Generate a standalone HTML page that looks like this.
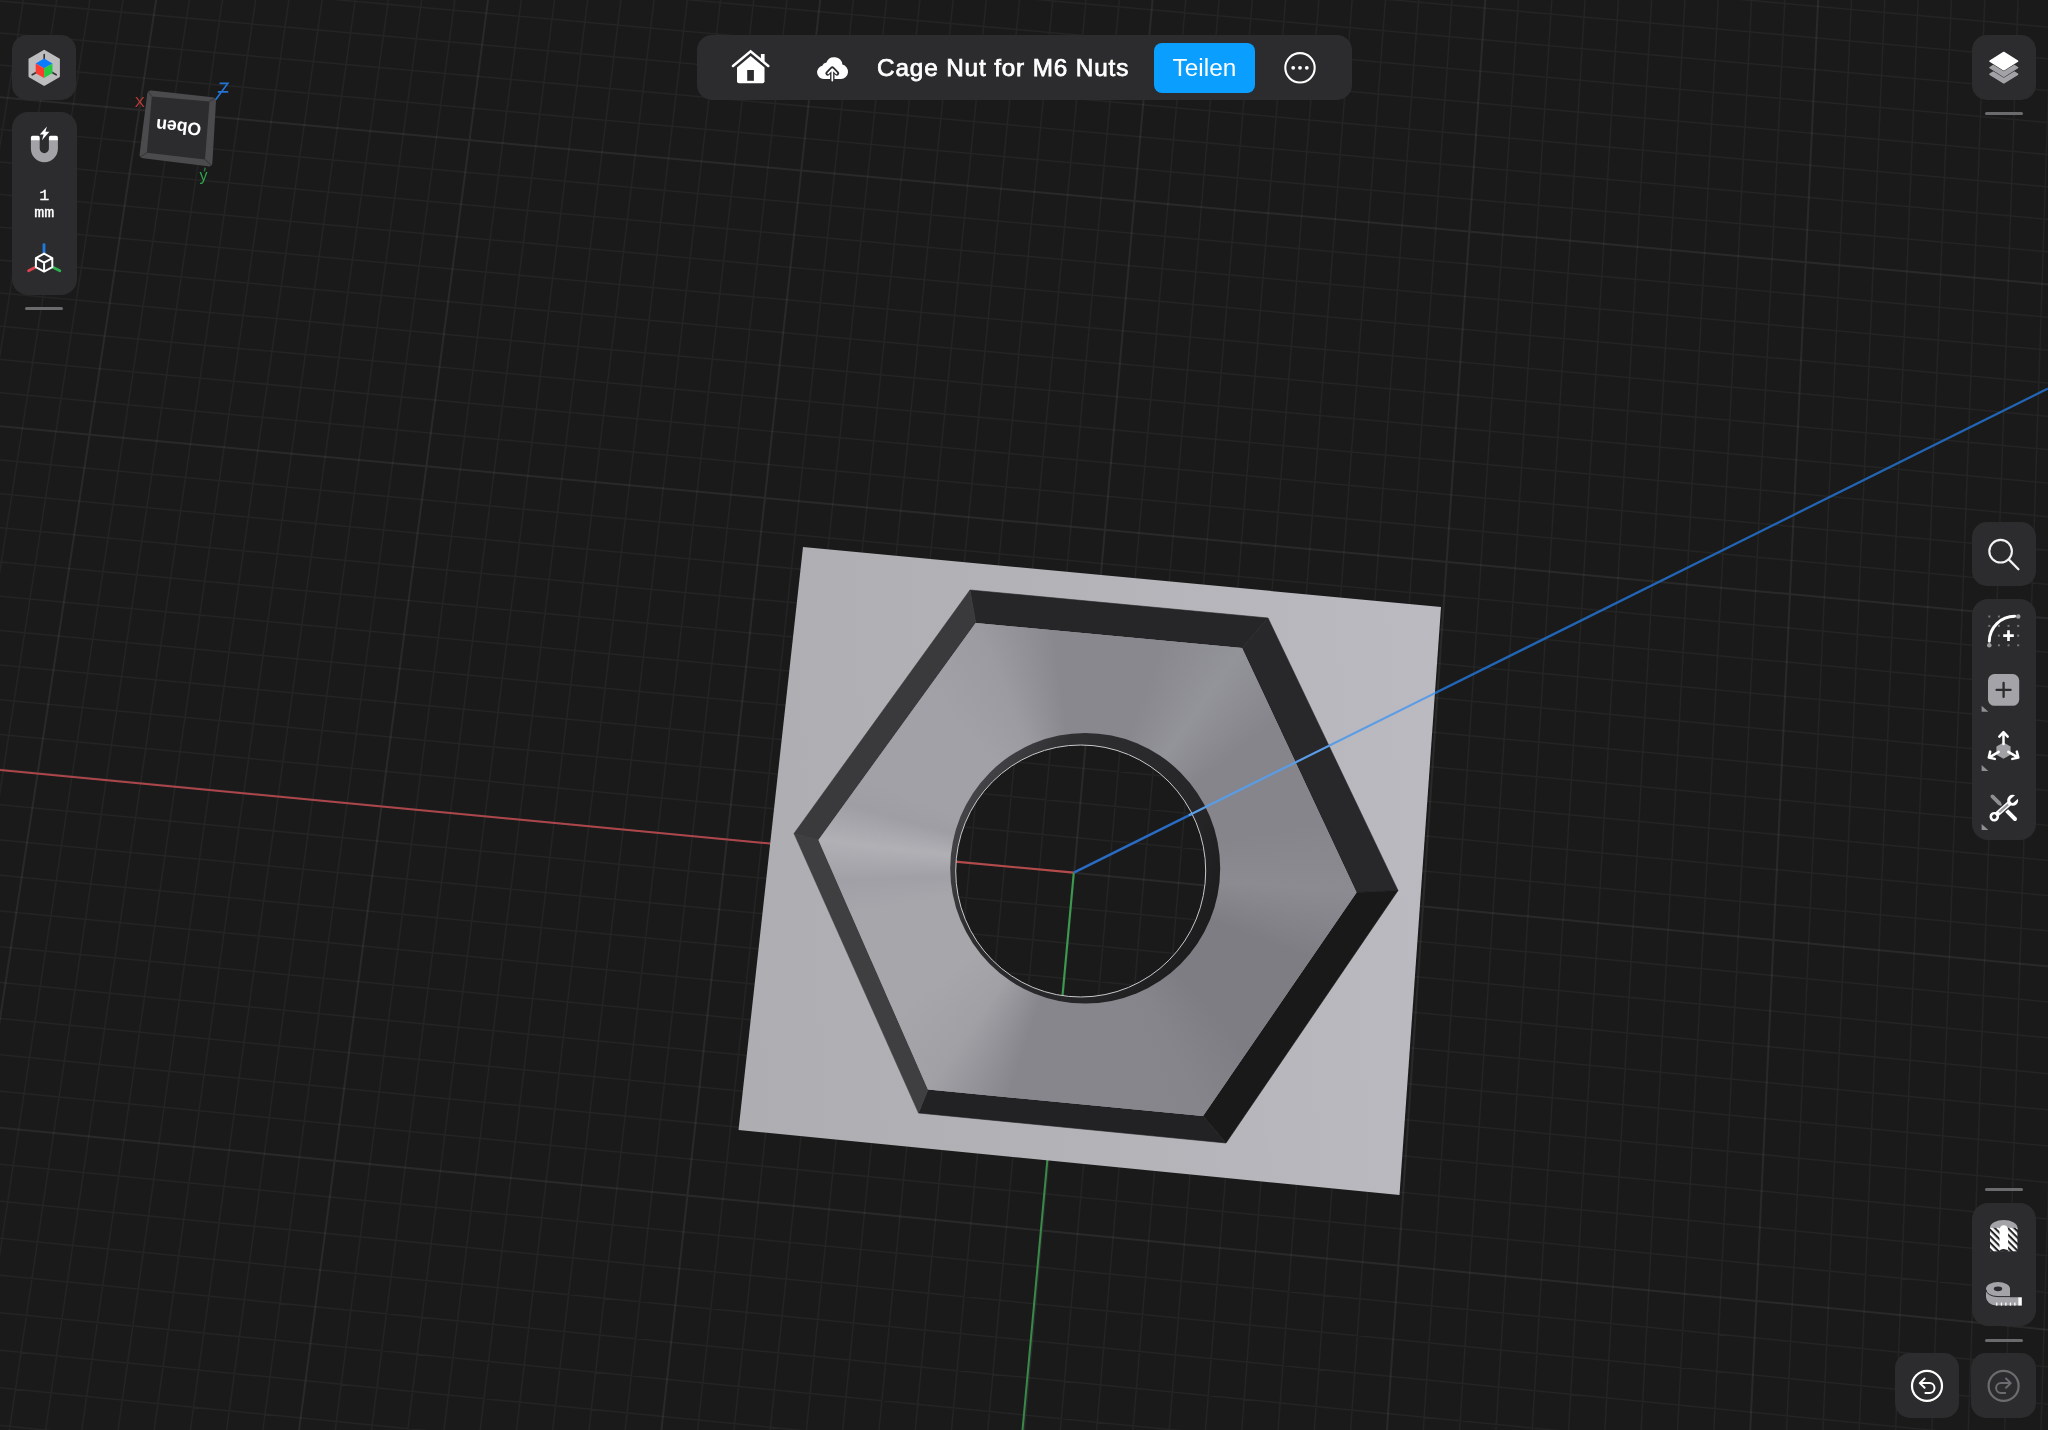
<!DOCTYPE html>
<html><head><meta charset="utf-8"><title>Cage Nut for M6 Nuts</title>
<style>
html,body{margin:0;padding:0;background:#1a1a1a;}
body{width:2048px;height:1430px;overflow:hidden;position:relative;font-family:"Liberation Sans",sans-serif;}
#scene{position:absolute;left:0;top:0;}
.pn{position:absolute;background:#2c2c2e;box-sizing:border-box;}
.sep{position:absolute;height:3px;border-radius:1.5px;background:#6b6b6e;}
.t{position:absolute;font-family:"Liberation Sans",sans-serif;will-change:transform;}
.m{position:absolute;font-family:"Liberation Mono",monospace;will-change:transform;}
</style></head><body>
<svg id="scene" width="2048" height="1430" viewBox="0 0 2048 1430">
<defs>
<linearGradient id="gpl" gradientUnits="userSpaceOnUse" x1="740" y1="900" x2="1440" y2="860"><stop offset="0" stop-color="#adadb2"/><stop offset="0.5" stop-color="#b3b3b8"/><stop offset="1" stop-color="#bbbac0"/></linearGradient>
<clipPath id="chex"><polygon points="975.7,623.0 1242.0,648.0 1356.5,892.5 1203.0,1116.0 928.0,1089.5 818.5,840.0"/></clipPath>
<clipPath id="chole"><ellipse cx="1080.7" cy="871" rx="125" ry="126"/></clipPath>
<clipPath id="cplate"><polygon points="803.0,547.0 1441.0,607.0 1399.5,1195.0 738.5,1130.0"/></clipPath>
<filter id="gb" x="0" y="0" width="100%" height="100%" filterUnits="userSpaceOnUse"><feGaussianBlur stdDeviation="0.45"/></filter>
<filter id="blur" x="-10%" y="-10%" width="120%" height="120%"><feGaussianBlur stdDeviation="9"/></filter>
<linearGradient id="gring" gradientUnits="userSpaceOnUse" x1="950" y1="800" x2="1220" y2="950"><stop offset="0" stop-color="#4a4a4e"/><stop offset="0.25" stop-color="#2e2e31"/><stop offset="0.7" stop-color="#262628"/><stop offset="1" stop-color="#1a1a1b"/></linearGradient>
</defs>
<g id="grid" fill="none" filter="url(#gb)"><path d="M2053.0 1036.5L2040.8 1435.0M2051.5 -5.0L2004.5 1435.0M2018.2 -5.0L1968.1 1435.0M1984.9 -5.0L1931.7 1435.0M1951.6 -5.0L1895.4 1435.0M1918.3 -5.0L1859.0 1435.0M1885.0 -5.0L1822.7 1435.0M1851.7 -5.0L1786.3 1435.0M1785.1 -5.0L1713.6 1435.0M1751.8 -5.0L1677.3 1435.0M1718.5 -5.0L1640.9 1435.0M1685.2 -5.0L1604.6 1435.0M1651.9 -5.0L1568.3 1435.0M1618.7 -5.0L1531.9 1435.0M1585.4 -5.0L1495.6 1435.0M1552.1 -5.0L1459.3 1435.0M1518.8 -5.0L1423.0 1435.0M1452.3 -5.0L1350.3 1435.0M1419.0 -5.0L1314.0 1435.0M1385.8 -5.0L1277.7 1435.0M1352.5 -5.0L1241.4 1435.0M1319.2 -5.0L1205.1 1435.0M1286.0 -5.0L1168.8 1435.0M1252.7 -5.0L1132.5 1435.0M1219.5 -5.0L1096.2 1435.0M1186.2 -5.0L1059.9 1435.0M1119.8 -5.0L987.3 1435.0M1086.5 -5.0L951.0 1435.0M1053.3 -5.0L914.8 1435.0M1020.0 -5.0L878.5 1435.0M986.8 -5.0L842.2 1435.0M953.6 -5.0L805.9 1435.0M920.4 -5.0L769.7 1435.0M887.1 -5.0L733.4 1435.0M853.9 -5.0L697.1 1435.0M787.5 -5.0L624.6 1435.0M754.3 -5.0L588.4 1435.0M721.1 -5.0L552.1 1435.0M687.9 -5.0L515.9 1435.0M654.7 -5.0L479.6 1435.0M621.5 -5.0L443.4 1435.0M588.3 -5.0L407.1 1435.0M555.1 -5.0L370.9 1435.0M521.9 -5.0L334.6 1435.0M455.5 -5.0L262.2 1435.0M422.3 -5.0L226.0 1435.0M389.1 -5.0L189.7 1435.0M355.9 -5.0L153.5 1435.0M322.8 -5.0L117.3 1435.0M289.6 -5.0L81.1 1435.0M256.4 -5.0L44.9 1435.0M223.2 -5.0L8.7 1435.0M190.1 -5.0L-5.0 1285.9M123.8 -5.0L-5.0 823.8M90.6 -5.0L-5.0 602.1M57.4 -5.0L-5.0 386.3M24.3 -5.0L-5.0 176.1M2043.2 -5.0L2053.0 -4.1M1690.9 -5.0L2053.0 27.5M1338.8 -5.0L2053.0 59.2M987.1 -5.0L2053.0 91.0M635.7 -5.0L2053.0 123.0M284.5 -5.0L2053.0 155.1M-5.0 0.6L2053.0 187.4M-5.0 32.5L2053.0 219.8M-5.0 64.5L2053.0 252.3M-5.0 129.0L2053.0 317.7M-5.0 161.4L2053.0 350.6M-5.0 194.0L2053.0 383.6M-5.0 226.7L2053.0 416.8M-5.0 259.6L2053.0 450.1M-5.0 292.5L2053.0 483.6M-5.0 325.7L2053.0 517.2M-5.0 358.9L2053.0 550.9M-5.0 392.3L2053.0 584.8M-5.0 459.5L2053.0 652.9M-5.0 493.3L2053.0 687.2M-5.0 527.3L2053.0 721.7M-5.0 561.4L2053.0 756.3M-5.0 595.6L2053.0 791.0M-5.0 630.0L2053.0 825.9M-5.0 664.5L2053.0 860.9M-5.0 699.2L2053.0 896.1M-5.0 734.0L2053.0 931.4M-5.0 804.1L2053.0 1002.5M-5.0 839.4L2053.0 1038.3M-5.0 874.8L2053.0 1074.2M-5.0 910.4L2053.0 1110.3M-5.0 946.1L2053.0 1146.6M-5.0 982.0L2053.0 1183.0M-5.0 1018.0L2053.0 1219.5M-5.0 1054.2L2053.0 1256.2M-5.0 1090.6L2053.0 1293.1M-5.0 1163.8L2053.0 1367.4M-5.0 1200.6L2053.0 1404.7M-5.0 1237.6L1980.2 1435.0M-5.0 1274.8L1602.3 1435.0M-5.0 1312.1L1224.8 1435.0M-5.0 1349.6L847.5 1435.0M-5.0 1387.2L470.6 1435.0M-5.0 1425.0L94.0 1435.0" stroke="#ffffff" stroke-opacity="0.042" stroke-width="1.5"/><path d="M1818.4 -5.0L1750.0 1435.0M1485.6 -5.0L1386.6 1435.0M1153.0 -5.0L1023.6 1435.0M820.7 -5.0L660.9 1435.0M488.7 -5.0L298.4 1435.0M156.9 -5.0L-5.0 1051.7M-5.0 96.7L2053.0 284.9M-5.0 425.8L2053.0 618.8M-5.0 769.0L2053.0 966.9M-5.0 1127.1L2053.0 1330.2" stroke="#ffffff" stroke-opacity="0.065" stroke-width="2"/></g>
<line x1="0" y1="769.9" x2="1073.8" y2="872.6" stroke="#ad464b" stroke-width="2"/>
<line x1="1073.8" y1="872.6" x2="1022.5" y2="1430" stroke="#398a49" stroke-width="2"/>
<line x1="1073.8" y1="872.6" x2="2048" y2="388.5" stroke="#2265b4" stroke-width="2.3"/>
<polygon points="803.0,547.0 1441.0,607.0 1399.5,1195.0 738.5,1130.0" fill="url(#gpl)"/>
<polygon points="970.0,590.0 1268.0,618.0 1242.0,648.0 975.7,623.0" fill="#262628" stroke="#262628" stroke-width="0.6"/>
<polygon points="1268.0,618.0 1398.0,890.5 1356.5,892.5 1242.0,648.0" fill="#28282b" stroke="#28282b" stroke-width="0.6"/>
<polygon points="1398.0,890.5 1226.0,1143.0 1203.0,1116.0 1356.5,892.5" fill="#19191a" stroke="#19191a" stroke-width="0.6"/>
<polygon points="1226.0,1143.0 918.5,1113.0 928.0,1089.5 1203.0,1116.0" fill="#222224" stroke="#222224" stroke-width="0.6"/>
<polygon points="918.5,1113.0 794.0,833.5 818.5,840.0 928.0,1089.5" fill="#3f3f42" stroke="#3f3f42" stroke-width="0.6"/>
<polygon points="794.0,833.5 970.0,590.0 975.7,623.0 818.5,840.0" fill="#3a3a3d" stroke="#3a3a3d" stroke-width="0.6"/>
<polygon points="975.7,623.0 1242.0,648.0 1356.5,892.5 1203.0,1116.0 928.0,1089.5 818.5,840.0" fill="#909096"/>
<g clip-path="url(#chex)"><foreignObject x="800" y="600" width="580" height="540"><div style="width:580px;height:540px;background:conic-gradient(from 0deg at 283.0px 270.0px, #88888e 0.0deg, #88888e 19.1deg, #93939a 35.6deg, #85858b 52.2deg, #85858b 78.2deg, #8b8b91 94.7deg, #7d7d83 111.3deg, #7d7d83 137.4deg, #85858b 154.0deg, #86868c 171.1deg, #86868c 198.1deg, #a0a0a5 215.2deg, #a6a6ab 232.4deg, #a6a6ab 259.3deg, #a0a0a6 267.5deg, #b0b0b5 276.5deg, #9e9ea4 285.5deg, #a1a1a7 293.3deg, #a1a1a7 319.7deg, #9b9ba1 336.5deg, #88888e 353.1deg, #88888e 360.0deg)"></div></foreignObject></g>
<ellipse cx="1085.2" cy="868.3" rx="135" ry="135.3" fill="url(#gring)"/>
<ellipse cx="1080.7" cy="871" rx="125" ry="126" fill="#1a1a1a"/>
<g clip-path="url(#chole)"><g fill="none" filter="url(#gb)"><path d="M2053.0 1036.5L2040.8 1435.0M2051.5 -5.0L2004.5 1435.0M2018.2 -5.0L1968.1 1435.0M1984.9 -5.0L1931.7 1435.0M1951.6 -5.0L1895.4 1435.0M1918.3 -5.0L1859.0 1435.0M1885.0 -5.0L1822.7 1435.0M1851.7 -5.0L1786.3 1435.0M1785.1 -5.0L1713.6 1435.0M1751.8 -5.0L1677.3 1435.0M1718.5 -5.0L1640.9 1435.0M1685.2 -5.0L1604.6 1435.0M1651.9 -5.0L1568.3 1435.0M1618.7 -5.0L1531.9 1435.0M1585.4 -5.0L1495.6 1435.0M1552.1 -5.0L1459.3 1435.0M1518.8 -5.0L1423.0 1435.0M1452.3 -5.0L1350.3 1435.0M1419.0 -5.0L1314.0 1435.0M1385.8 -5.0L1277.7 1435.0M1352.5 -5.0L1241.4 1435.0M1319.2 -5.0L1205.1 1435.0M1286.0 -5.0L1168.8 1435.0M1252.7 -5.0L1132.5 1435.0M1219.5 -5.0L1096.2 1435.0M1186.2 -5.0L1059.9 1435.0M1119.8 -5.0L987.3 1435.0M1086.5 -5.0L951.0 1435.0M1053.3 -5.0L914.8 1435.0M1020.0 -5.0L878.5 1435.0M986.8 -5.0L842.2 1435.0M953.6 -5.0L805.9 1435.0M920.4 -5.0L769.7 1435.0M887.1 -5.0L733.4 1435.0M853.9 -5.0L697.1 1435.0M787.5 -5.0L624.6 1435.0M754.3 -5.0L588.4 1435.0M721.1 -5.0L552.1 1435.0M687.9 -5.0L515.9 1435.0M654.7 -5.0L479.6 1435.0M621.5 -5.0L443.4 1435.0M588.3 -5.0L407.1 1435.0M555.1 -5.0L370.9 1435.0M521.9 -5.0L334.6 1435.0M455.5 -5.0L262.2 1435.0M422.3 -5.0L226.0 1435.0M389.1 -5.0L189.7 1435.0M355.9 -5.0L153.5 1435.0M322.8 -5.0L117.3 1435.0M289.6 -5.0L81.1 1435.0M256.4 -5.0L44.9 1435.0M223.2 -5.0L8.7 1435.0M190.1 -5.0L-5.0 1285.9M123.8 -5.0L-5.0 823.8M90.6 -5.0L-5.0 602.1M57.4 -5.0L-5.0 386.3M24.3 -5.0L-5.0 176.1M2043.2 -5.0L2053.0 -4.1M1690.9 -5.0L2053.0 27.5M1338.8 -5.0L2053.0 59.2M987.1 -5.0L2053.0 91.0M635.7 -5.0L2053.0 123.0M284.5 -5.0L2053.0 155.1M-5.0 0.6L2053.0 187.4M-5.0 32.5L2053.0 219.8M-5.0 64.5L2053.0 252.3M-5.0 129.0L2053.0 317.7M-5.0 161.4L2053.0 350.6M-5.0 194.0L2053.0 383.6M-5.0 226.7L2053.0 416.8M-5.0 259.6L2053.0 450.1M-5.0 292.5L2053.0 483.6M-5.0 325.7L2053.0 517.2M-5.0 358.9L2053.0 550.9M-5.0 392.3L2053.0 584.8M-5.0 459.5L2053.0 652.9M-5.0 493.3L2053.0 687.2M-5.0 527.3L2053.0 721.7M-5.0 561.4L2053.0 756.3M-5.0 595.6L2053.0 791.0M-5.0 630.0L2053.0 825.9M-5.0 664.5L2053.0 860.9M-5.0 699.2L2053.0 896.1M-5.0 734.0L2053.0 931.4M-5.0 804.1L2053.0 1002.5M-5.0 839.4L2053.0 1038.3M-5.0 874.8L2053.0 1074.2M-5.0 910.4L2053.0 1110.3M-5.0 946.1L2053.0 1146.6M-5.0 982.0L2053.0 1183.0M-5.0 1018.0L2053.0 1219.5M-5.0 1054.2L2053.0 1256.2M-5.0 1090.6L2053.0 1293.1M-5.0 1163.8L2053.0 1367.4M-5.0 1200.6L2053.0 1404.7M-5.0 1237.6L1980.2 1435.0M-5.0 1274.8L1602.3 1435.0M-5.0 1312.1L1224.8 1435.0M-5.0 1349.6L847.5 1435.0M-5.0 1387.2L470.6 1435.0M-5.0 1425.0L94.0 1435.0" stroke="#ffffff" stroke-opacity="0.042" stroke-width="1.5"/><path d="M1818.4 -5.0L1750.0 1435.0M1485.6 -5.0L1386.6 1435.0M1153.0 -5.0L1023.6 1435.0M820.7 -5.0L660.9 1435.0M488.7 -5.0L298.4 1435.0M156.9 -5.0L-5.0 1051.7M-5.0 96.7L2053.0 284.9M-5.0 425.8L2053.0 618.8M-5.0 769.0L2053.0 966.9M-5.0 1127.1L2053.0 1330.2" stroke="#ffffff" stroke-opacity="0.065" stroke-width="2"/></g>
<line x1="900" y1="856.6" x2="1073.8" y2="872.6" stroke="#b54a4a" stroke-width="2.1"/>
<line x1="1073.8" y1="872.6" x2="1050" y2="1131.3" stroke="#3c9a4d" stroke-width="2.1"/>
<line x1="1073.8" y1="872.6" x2="1300" y2="760.2" stroke="#2a6cc4" stroke-width="2.6"/>
</g>
<ellipse cx="1080.7" cy="871" rx="125" ry="126" fill="none" stroke="#c9c9cc" stroke-width="1"/>
<g clip-path="url(#cplate)"><line x1="1189" y1="815.3" x2="1460" y2="680.7" stroke="#5a9ce6" stroke-width="2.2"/></g>
</svg>
<div class="pn" style="left:12px;top:35px;width:64px;height:65px;border-radius:15px;"></div>
<div class="pn" style="left:12px;top:112px;width:64.5px;height:183px;border-radius:16px;"></div>
<div class="sep" style="left:25.3px;top:306.6px;width:38px"></div>
<div class="pn" style="left:696.5px;top:35.3px;width:655px;height:65px;border-radius:15px;"></div>
<div style="position:absolute;left:1154px;top:43.2px;width:100.8px;height:50.3px;border-radius:8px;background:#0a9ffe"></div>
<div class="t" style="left:1154px;top:43.2px;width:100.8px;height:50.3px;line-height:50.3px;text-align:center;font-size:24.4px;color:#fff">Teilen</div>
<div class="t" style="left:877.2px;top:48.4px;height:40px;line-height:40px;font-size:24.3px;color:#fff;letter-spacing:0.86px;-webkit-text-stroke:0.75px #fff;white-space:nowrap">Cage Nut for M6 Nuts</div>
<div class="pn" style="left:1971.5px;top:35px;width:64px;height:65px;border-radius:15px;"></div>
<div class="sep" style="left:1984.7px;top:112px;width:38px"></div>
<div class="pn" style="left:1971.6px;top:522.2px;width:64.2px;height:64.2px;border-radius:15px;"></div>
<div class="pn" style="left:1971.5px;top:598.9px;width:64.4px;height:241px;border-radius:16px;"></div>
<div class="sep" style="left:1985px;top:1188px;width:38px"></div>
<div class="pn" style="left:1971.8px;top:1203.2px;width:64px;height:123px;border-radius:16px;"></div>
<div class="sep" style="left:1985px;top:1338.5px;width:38px"></div>
<div class="pn" style="left:1895px;top:1353px;width:64.2px;height:65px;border-radius:15px;"></div>
<div class="pn" style="left:1971px;top:1353px;width:64.6px;height:65px;border-radius:15px;"></div>
<div class="m" style="left:12px;top:188px;width:64.5px;text-align:center;font-size:15.5px;line-height:17.2px;color:#fff;-webkit-text-stroke:0.3px #fff;transform:scaleX(1.08)">1<br>mm</div>
<svg id="icons" width="2048" height="1430" viewBox="0 0 2048 1430" style="position:absolute;left:0;top:0;will-change:transform">
<defs><pattern id="hatch" width="4.6" height="4.6" patternUnits="userSpaceOnUse" patternTransform="rotate(45 1990 1228)"><rect width="4.6" height="4.6" fill="#fff"/><rect x="0" y="0" width="4.6" height="2.1" fill="#242426"/></pattern></defs>
<polygon points="44.2,50.8 58.9,59.3 58.9,76.3 44.2,84.8 29.5,76.3 29.5,59.3" fill="#bdbdc0" stroke="#bdbdc0" stroke-width="2" stroke-linejoin="round"/>
<path d="M44.2 54.5V60 M32.2 74.8L36.6 72.3 M56.2 74.8L51.8 72.3" stroke="#333336" stroke-width="1.6" stroke-linecap="round"/>
<polygon points="44.1,58.6 52.5,63.4 44.1,68.3 35.7,63.4" fill="#0a7aff"/>
<polygon points="35.7,63.4 44.1,68.3 44.1,78.0 35.7,73.2" fill="#ff3b30"/>
<polygon points="44.1,68.3 52.5,63.4 52.5,73.1 44.1,78.0" fill="#28c840"/>
<path d="M30.9 140 V148.8 A13.5 13.5 0 0 0 57.9 148.8 V140 H48.9 V148.6 A4.6 4.6 0 0 1 39.7 148.6 V140 Z" fill="#a2a2a7"/>
<path d="M30.9 140.2 V137.4 A1.6 1.6 0 0 1 32.5 135.8 H38.1 A1.6 1.6 0 0 1 39.7 137.4 V140.2 Z M48.9 140.2 V137.4 A1.6 1.6 0 0 1 50.5 135.8 H56.3 A1.6 1.6 0 0 1 57.9 137.4 V140.2 Z" fill="#fff"/>
<path d="M46.9 126.6 L39.8 134.6 H43.6 L42.0 140.2 L49.4 131.8 H45.4 Z" fill="#fff"/>
<path d="M44 244.6V252.6" stroke="#1f7ae0" stroke-width="2.8" stroke-linecap="round"/>
<path d="M35.4 267.3L28.6 270.8" stroke="#e0444e" stroke-width="2.8" stroke-linecap="round"/>
<path d="M52.8 267.3L59.8 270.8" stroke="#30b452" stroke-width="2.8" stroke-linecap="round"/>
<path d="M44.1 253.6 L52.3 258.1 V267.2 L44.1 271.6 L35.9 267.2 V258.1 Z M35.9 258.1 L44.1 262.6 L52.3 258.1 M44.1 262.6 V271.6" fill="none" stroke="#fff" stroke-width="2" stroke-linejoin="round"/>
<path d="M737 67.4 L750.6 55.9 L764.5 67.4 V81.2 A2 2 0 0 1 762.5 83.2 H739 A2 2 0 0 1 737 81.2 Z" fill="#fff"/>
<path d="M733 66 L750.6 51.3 L768.3 66" fill="none" stroke="#fff" stroke-width="2.5" stroke-linecap="round" stroke-linejoin="miter"/>
<rect x="760.9" y="54" width="3.7" height="8" fill="#fff"/>
<rect x="747.2" y="70" width="6.7" height="10.8" fill="#2c2c2e"/>
<path d="M823.6 79 A6.7 6.7 0 0 1 822.2 65.8 A5.6 5.6 0 0 1 826.4 62.6 A8.3 8.3 0 0 1 842.4 64.6 A7.3 7.3 0 0 1 841 79 Z" fill="#fff"/>
<path d="M832.3 81.4 V70.6 M827.6 73.4 L832.3 68.6 L837 73.4" fill="none" stroke="#2c2c2e" stroke-width="4.4" stroke-linecap="round" stroke-linejoin="round"/>
<path d="M832.3 80.6 V70.6 M828.2 73.4 L832.3 69.2 L836.4 73.4" fill="none" stroke="#fff" stroke-width="1.7" stroke-linecap="round" stroke-linejoin="round"/>
<circle cx="1300" cy="67.8" r="14.7" fill="none" stroke="#fff" stroke-width="2.1"/>
<circle cx="1293.2" cy="67.8" r="1.9" fill="#fff"/><circle cx="1300" cy="67.8" r="1.9" fill="#fff"/><circle cx="1306.8" cy="67.8" r="1.9" fill="#fff"/>
<path d="M2003.8 65.6 L2017.6 74.2 L2003.8 82.8 L1990.0 74.2 Z" fill="#a2a2a7" stroke="#a2a2a7" stroke-width="1.6" stroke-linejoin="round" />
<path d="M2003.8 59.6 L2017.6 68.2 L2003.8 76.8 L1990.0 68.2 Z" fill="#2c2c2e" stroke="#2c2c2e" stroke-width="1.6" stroke-linejoin="round" />
<path d="M2003.8 59.0 L2017.6 67.6 L2003.8 76.2 L1990.0 67.6 Z" fill="#a2a2a7" stroke="#a2a2a7" stroke-width="1.6" stroke-linejoin="round" />
<path d="M2003.8 53.2 L2017.6 61.8 L2003.8 70.4 L1990.0 61.8 Z" fill="#2c2c2e" stroke="#2c2c2e" stroke-width="1.6" stroke-linejoin="round" />
<path d="M2003.8 52.5 L2017.6 61.1 L2003.8 69.7 L1990.0 61.1 Z" fill="#ffffff" stroke="#ffffff" stroke-width="1.6" stroke-linejoin="round" />
<circle cx="2000.6" cy="551.2" r="11.3" fill="none" stroke="#f2f2f2" stroke-width="2.1"/>
<path d="M2008.7 559.4 L2018.4 569.2" stroke="#f2f2f2" stroke-width="2.3" stroke-linecap="round"/>
<rect x="1988.3" y="615.5" width="2" height="2" fill="#77777c"/>
<rect x="1997.9" y="615.5" width="2" height="2" fill="#77777c"/>
<rect x="1988.3" y="624.9" width="2" height="2" fill="#77777c"/>
<rect x="1997.9" y="624.9" width="2" height="2" fill="#77777c"/>
<rect x="2007.5" y="624.9" width="2" height="2" fill="#77777c"/>
<rect x="2017.2" y="624.9" width="2" height="2" fill="#77777c"/>
<rect x="1997.9" y="634.6" width="2" height="2" fill="#77777c"/>
<rect x="2017.2" y="634.6" width="2" height="2" fill="#77777c"/>
<rect x="1997.9" y="644.3" width="2" height="2" fill="#77777c"/>
<rect x="2007.5" y="644.3" width="2" height="2" fill="#77777c"/>
<rect x="2017.2" y="644.3" width="2" height="2" fill="#77777c"/>
<path d="M1989.3 641.3 A25.4 25.4 0 0 1 2014.7 616.3" fill="none" stroke="#fff" stroke-width="2.9" stroke-linecap="round"/>
<circle cx="1989.3" cy="645.3" r="2.3" fill="#9a9a9f"/><circle cx="2018.2" cy="616.5" r="2.3" fill="#9a9a9f"/>
<path d="M2003.2 635.6H2013.8 M2008.5 630.3V640.9" stroke="#fff" stroke-width="2.7" stroke-linecap="butt"/>
<rect x="1988" y="674" width="31.2" height="31.8" rx="6.5" fill="#a3a3a8"/>
<path d="M1996.6 689.9H2010.6 M2003.6 682.9V696.9" stroke="#2c2c2e" stroke-width="2.3" stroke-linecap="round"/>
<path d="M1981.6 705.8 V711.8 H1988.4 Z" fill="#8e8e93"/>
<path d="M1981.6 765.0 V771.0 H1988.4 Z" fill="#8e8e93"/>
<path d="M1981.6 824.1 V830.1 H1988.4 Z" fill="#8e8e93"/>
<polygon points="2003.5,742.4 2010.6,746.5 2010.6,754.7 2003.5,758.8 1996.4,754.7 1996.4,746.5" fill="#a0a0a5"/>
<path d="M2003.5 744V732.6 M1999.3 736.6L2003.5 732.2L2007.7 736.6" fill="none" stroke="#fff" stroke-width="2.5" stroke-linecap="round" stroke-linejoin="round"/>
<path d="M1998.7 751.8L1989.4 757.3 M1990.2 751.6L1988.8 757.6L1994.8 758.9" fill="none" stroke="#fff" stroke-width="2.5" stroke-linecap="round" stroke-linejoin="round"/>
<path d="M2008.3 751.8L2017.8 757.3 M2016.8 751.6L2018.3 757.6L2012.3 758.9" fill="none" stroke="#fff" stroke-width="2.5" stroke-linecap="round" stroke-linejoin="round"/>
<path d="M1992.4 796.4 L1999.4 803.4" stroke="#8e8e93" stroke-width="3.8" stroke-linecap="round"/>
<path d="M1999 803 L2006 810" stroke="#8e8e93" stroke-width="1.8"/>
<path d="M2006.4 810.4 L2015 819" stroke="#fff" stroke-width="4" stroke-linecap="round"/>
<g transform="translate(1994.3,816.7) rotate(-41.7)">
<path d="M3 0H22" stroke="#2c2c2e" stroke-width="7.4"/>
<circle cx="24.6" cy="0" r="6.6" fill="#2c2c2e"/>
<path d="M3 0H22" stroke="#fff" stroke-width="5"/>
<path d="M6.5 0H18.5" stroke="#9a9a9f" stroke-width="2.1"/>
<circle cx="24.6" cy="0" r="5.5" fill="#fff"/>
<path d="M24.4 0H32" stroke="#2c2c2e" stroke-width="4.6" stroke-linecap="round"/>
<circle cx="0" cy="0" r="4.8" fill="#fff"/><circle cx="0" cy="0" r="2.2" fill="#2c2c2e"/>
</g>
<ellipse cx="2003.7" cy="1227.6" rx="13.7" ry="7.6" fill="#a3a3a8"/>
<rect x="1990" y="1227.8" width="27.4" height="23.5" fill="url(#hatch)"/>
<path d="M1999.5 1251.3 V1229.5 A4.3 4.3 0 0 1 2008.1 1229.5 V1251.3 A4.3 2.4 0 0 0 1999.5 1251.3 Z" fill="#fff"/>
<path d="M1998.9 1251.8 A4.9 2.6 0 0 1 2008.7 1251.8 Z" fill="#2c2c2e"/>
<path d="M1986 1288.8 A12 6.8 0 0 1 2010 1288.8 V1297.3 H2018.4 V1305.6 H1996 A10 9 0 0 1 1986 1297 Z" fill="#a3a3a8"/>
<path d="M1986 1289.5 A12 6.8 0 0 0 1998 1296.6 H2010" fill="none" stroke="#2c2c2e" stroke-width="1"/>
<ellipse cx="1998" cy="1288.8" rx="4.2" ry="2.4" fill="#2c2c2e"/>
<rect x="2018.2" y="1297.3" width="3.6" height="8.3" fill="#fff"/>
<rect x="1996.1" y="1302.6" width="1.3" height="3" fill="#fff"/>
<rect x="2000.8" y="1302.6" width="1.3" height="3" fill="#fff"/>
<rect x="2005.2" y="1302.6" width="1.3" height="3" fill="#fff"/>
<rect x="2009.8" y="1302.6" width="1.3" height="3" fill="#fff"/>
<rect x="2014.2" y="1302.6" width="1.3" height="3" fill="#fff"/>
<circle cx="1927" cy="1385.9" r="15" fill="none" stroke="#fff" stroke-width="2.2"/>
<path d="M1924.6 1378.5 L1919.8 1383.1 L1924.6 1387.8 M1920.2 1383.1 H1929.6 A4.9 4.9 0 0 1 1929.6 1392.9 H1925.4" fill="none" stroke="#fff" stroke-width="2" stroke-linecap="round" stroke-linejoin="round"/>
<circle cx="2003.6" cy="1385.9" r="15" fill="none" stroke="#6c6c70" stroke-width="2.2"/>
<path d="M2006 1378.5 L2010.8 1383.1 L2006 1387.8 M2010.4 1383.1 H2001 A4.9 4.9 0 0 0 2001 1392.9 H2005.2" fill="none" stroke="#6c6c70" stroke-width="2" stroke-linecap="round" stroke-linejoin="round"/>
<polygon points="151.2,94.6 212,101.2 208.4,162.4 143.6,154.2" fill="#4b4b4e" stroke="#4b4b4e" stroke-width="8" stroke-linejoin="round"/>
<polygon points="151.8,96.4 209.5,101.4 205,159.5 146.8,152.7" fill="#2c2c2f"/>
<path d="M148.5 91.6L151.8 96.4 M214.5 98.8L209.5 101.4 M211 165L205 159.5 M140.8 156.8L146.8 152.7" stroke="#3c3c3f" stroke-width="1.2"/>
<text x="0" y="0" transform="translate(178.6,127.2) rotate(186)" text-anchor="middle" dominant-baseline="central" font-family="Liberation Sans, sans-serif" font-weight="bold" font-size="17.8" fill="#fff">Oben</text>
<text x="139.8" y="107.2" text-anchor="middle" font-family="Liberation Sans, sans-serif" font-size="15" fill="#c03c38">X</text>
<path d="M219.6 83.4H227.8L215.6 99.8 M217.8 91.8H228.2" fill="none" stroke="#2474d6" stroke-width="1.7" stroke-linejoin="miter"/>
<path d="M205.2 167.6L204.4 171.4" stroke="#2b7a40" stroke-width="1.4"/>
<text x="203.6" y="181" text-anchor="middle" font-family="Liberation Sans, sans-serif" font-size="16" fill="#2fa34c">y</text>
</svg>
</body></html>
